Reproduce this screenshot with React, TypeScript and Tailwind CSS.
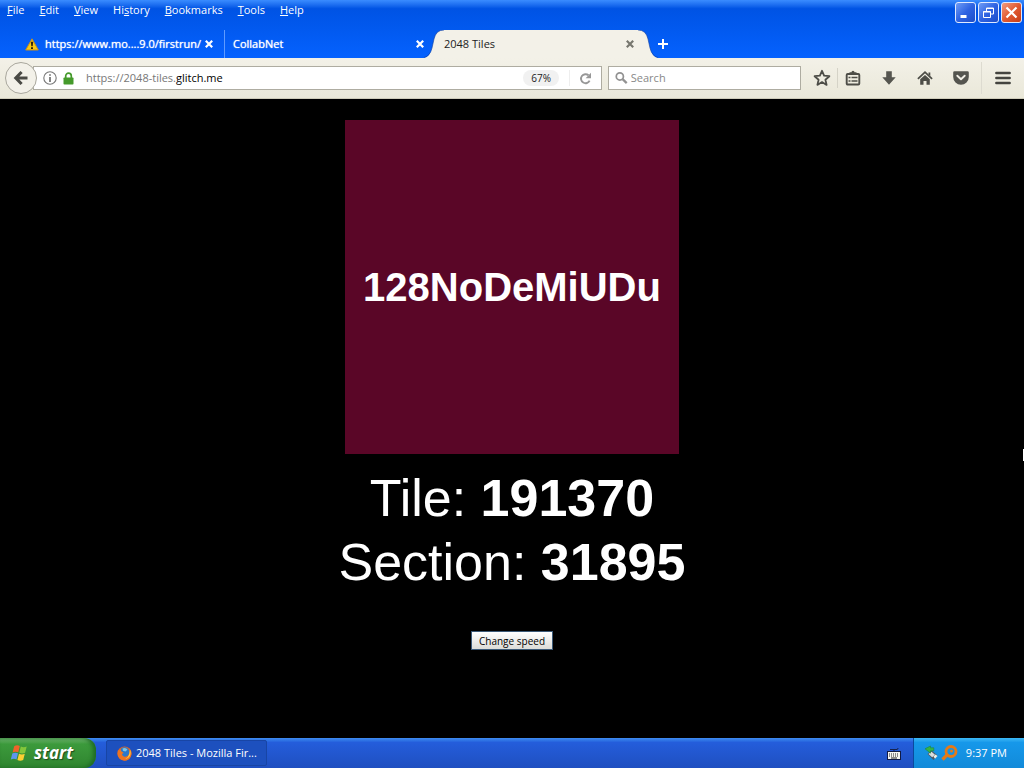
import React from "react";

const menus = ["File", "Edit", "View", "History", "Bookmarks", "Tools", "Help"];

function WarningIcon() {
  return (
    <svg width="14" height="13" viewBox="0 0 14 13" aria-hidden="true">
      <path d="M7 .8 13.3 12H.7Z" fill="#f6c915" stroke="#c98f1c" strokeWidth="1" strokeLinejoin="round" />
      <path d="M5.800 3.800h2.400l-.5 4.400H6.300ZM6 9.200h2v1.700H6Z" fill="#33250a" />
    </svg>
  );
}

function CloseGlyph() {
  return (
    <svg width="8" height="8" viewBox="0 0 8 8" aria-hidden="true">
      <path d="m.8.8 6.400 6.400M7.200.8.8 7.200" stroke="currentColor" strokeWidth="2.200" />
    </svg>
  );
}

function BackIcon() {
  return (
    <svg width="16" height="16" viewBox="0 0 16 16" aria-hidden="true">
      <path d="M8.6 2 2.8 8l5.8 6M3.5 8h11" fill="none" stroke="#4a4a45" strokeWidth="3.1" />
    </svg>
  );
}

function InfoIcon() {
  return (
    <svg width="14" height="14" viewBox="0 0 14 14" aria-hidden="true">
      <circle cx="7" cy="7" r="6.2" fill="none" stroke="#777" strokeWidth="1.1" />
      <path d="M6.2 3.2h1.6v1.5H6.2ZM6.2 6h1.6v5H6.2Z" fill="#666" />
    </svg>
  );
}

function LockIcon() {
  return (
    <svg width="11" height="13" viewBox="0 0 11 13" aria-hidden="true">
      <path d="M2.7 6V4a2.8 2.8 0 0 1 5.6 0v2" fill="none" stroke="#459a2b" strokeWidth="1.7" />
      <rect x=".5" y="5.5" width="10" height="7" rx=".8" fill="#459a2b" />
    </svg>
  );
}

function ReloadIcon() {
  return (
    <svg width="13" height="13" viewBox="0 0 13 13" aria-hidden="true">
      <path d="M9.5 3.3A4.5 4.5 0 1 0 10.6 8.6" fill="none" stroke="#979797" strokeWidth="1.9" />
      <path d="M12 .8v5.4H6.6Z" fill="#979797" />
    </svg>
  );
}

function SearchIcon() {
  return (
    <svg width="14" height="14" viewBox="0 0 14 14" aria-hidden="true">
      <circle cx="5.3" cy="5.3" r="3.9" fill="none" stroke="#929292" strokeWidth="1.9" />
      <path d="m8.3 8.3 4.5 4.3" stroke="#929292" strokeWidth="2.5" />
    </svg>
  );
}

function StarIcon() {
  return (
    <svg width="18" height="18" viewBox="0 0 18 18" aria-hidden="true">
      <path
        d="m9 1.8 2.1 4.900 5.300.5-4 3.500 1.200 5.200L9 13.100l-4.600 2.800 1.200-5.200-4-3.500 5.300-.5Z"
        fill="none"
        stroke="#4d4d47"
        strokeWidth="1.8"
        strokeLinejoin="round"
      />
    </svg>
  );
}

function ClipboardIcon() {
  return (
    <svg width="16" height="16" viewBox="0 0 16 16" aria-hidden="true">
      <rect x="1.700" y="4" width="12.600" height="10.500" rx="1" fill="none" stroke="#4d4d47" strokeWidth="1.900" />
      <path d="M4.500 4.500V2.200h2a1.500 1.500 0 0 1 3 0h2v2.300Z" fill="#4d4d47" />
      <path d="M3.500 7.500h2M6.500 7.500h6M3.500 11h2M6.500 11h6" stroke="#4d4d47" strokeWidth="1.500" />
    </svg>
  );
}

function DownloadIcon() {
  return (
    <svg width="16" height="16" viewBox="0 0 16 16" aria-hidden="true">
      <path d="M5.2 1.2h5.6v6h3.9L8 14.8 1.3 7.2h3.9Z" fill="#55554f" />
    </svg>
  );
}

function HomeIcon() {
  return (
    <svg width="16" height="16" viewBox="0 0 16 16" aria-hidden="true">
      <path d="m.9 8.8 7.1-6.600 7.100 6.600" fill="none" stroke="#4d4d47" strokeWidth="1.8" />
      <path d="M11.5 2.500h1.800v3.600l-1.800-1.600Z" fill="#4d4d47" />
      <path d="M3.200 9.200 8 4.900l4.800 4.300v5.600H9.500V11h-3v3.800H3.200Z" fill="#4d4d47" />
    </svg>
  );
}

function PocketIcon() {
  return (
    <svg width="16" height="16" viewBox="0 0 16 16" aria-hidden="true">
      <path d="M1.5 1.3h13q1.3 0 1.3 1.3V7A7.8 7.8 0 0 1 .2 7V2.6q0-1.3 1.3-1.3Z" fill="#55554f" />
      <path d="M4.3 5.7 8 9.2l3.7-3.5" fill="none" stroke="#f1efe6" strokeWidth="1.9" strokeLinecap="round" strokeLinejoin="round" />
    </svg>
  );
}

function MenuIcon() {
  return (
    <svg width="16" height="14" viewBox="0 0 16 14" aria-hidden="true">
      <path d="M1.4 2h13.2M1.4 7h13.2M1.4 12h13.2" stroke="#44443f" strokeWidth="2.6" strokeLinecap="round" />
    </svg>
  );
}

function WindowsFlag() {
  return (
    <svg width="20" height="18" viewBox="0 0 20 18" aria-hidden="true">
      <path d="M4.200 2.200Q7 .6 9.800 2L8.300 8.200Q5.400 7 2.600 8.400Z" fill="#f0632a" />
      <path d="M10.800 2.500q2.800 1.400 5.900 0l-1.600 6.200q-3 1.400-5.800 0Z" fill="#83c63b" />
      <path d="M2.300 9.400q2.800-1.400 5.700-.1L6.500 15.400Q3.700 14.200.8 15.600Z" fill="#5d96ee" />
      <path d="M9 9.800q2.900 1.400 5.800 0l-1.600 6.200q-2.900 1.400-5.800 0Z" fill="#fbcf33" />
    </svg>
  );
}

function FirefoxIcon() {
  return (
    <svg width="15" height="15" viewBox="0 0 15 15" aria-hidden="true">
      <circle cx="7.5" cy="7.5" r="7" fill="#e8641b" />
      <circle cx="7.5" cy="6.3" r="5" fill="#2b78c9" />
      <path d="M5.500 2.500q3-1.500 5 1l-2 2-2.500-.8Z" fill="#75c4ec" />
      <path d="M1 3.500.5 7.500a7 7 0 0 0 13.800 1.800Q15 5 12 2q1.300 3 .3 5.300-1.300 4-5 3.500Q4.600 10 5.200 7.800L6.800 7 4 5 3.700 3Q2.500 3.600 2 5Z" fill="#ee7420" />
      <path d="M13 3.400q1.300 2.700.3 5.600-1.600 3.500-5 4 3.500-2 4-5Z" fill="#fbd24a" />
    </svg>
  );
}

function KeyboardIcon() {
  return (
    <svg width="14" height="13" viewBox="0 0 14 13" aria-hidden="true">
      <path d="M3 2.500h7q1 0 1-1.500M7 5V3" fill="none" stroke="#16234f" strokeWidth="1" />
      <rect x=".5" y="4.500" width="13" height="8" fill="#f4f4f0" stroke="#101a44" />
      <path d="M2 7h10M2 9h10" stroke="#222" strokeWidth="1" strokeDasharray="1 1" />
      <path d="M4 11h6" stroke="#222" strokeWidth="1" />
    </svg>
  );
}

function UsbIcon() {
  return (
    <svg width="15" height="16" viewBox="0 0 15 16" aria-hidden="true">
      <path d="m3.5 9 4-3.5 6 5-4 4.5Z" fill="#4f5963" />
      <path d="m4.5 9 3-2.2 3.5 3-2.8 2.4Z" fill="#d8dde0" />
      <path d="m9.5 11.5 2-2 2 1.500-2.500 2.800Z" fill="#f0f0e8" />
      <path d="M1 3.800 6.500 1v1.800h3.300v3H6.500v2.400Z" fill="#35b446" stroke="#1c8742" strokeWidth=".6" />
    </svg>
  );
}

function MagnifierIcon() {
  return (
    <svg width="17" height="16" viewBox="0 0 17 16" aria-hidden="true">
      <circle cx="10" cy="6.500" r="5" fill="none" stroke="#e57a16" strokeWidth="2.800" />
      <circle cx="10.5" cy="6" r="1.5" fill="#e57a16" />
      <path d="m6.500 9.500-5 5" stroke="#e57a16" strokeWidth="3.200" />
    </svg>
  );
}

const caption =
  "flex h-[21px] w-[21px] items-center justify-center rounded-[3px] border border-[#dfe9ff]";

function WindowButtons() {
  return (
    <div className="flex gap-0.5 pt-0.5 pr-0.5">
      <button aria-label="Minimize" className={caption + " bg-linear-to-br from-[#6f9bf5] via-[#2f63e2] to-[#1b4dc9]"}>
        <svg width="15" height="15" viewBox="0 0 15 15"><path d="M2.500 11.500h6" stroke="#fff" strokeWidth="3" /></svg>
      </button>
      <button aria-label="Restore" className={caption + " bg-linear-to-br from-[#6f9bf5] via-[#2f63e2] to-[#1b4dc9]"}>
        <svg width="15" height="15" viewBox="0 0 15 15" fill="none" stroke="#fff">
          <path d="M5.500 6V3h7v6H10M5 3.500h8" />
          <path d="M2.500 6.500h7v6h-7ZM2 7h8" />
        </svg>
      </button>
      <button aria-label="Close" className={caption + " bg-linear-to-br from-[#f09a7d] via-[#e25a31] to-[#c63d15]"}>
        <svg width="15" height="15" viewBox="0 0 15 15"><path d="m2.500 2.500 10 10m0-10-10 10" stroke="#fff" strokeWidth="2.200" /></svg>
      </button>
    </div>
  );
}

function Tabs() {
  return (
    <div className="flex h-7 items-stretch pl-[25px]">
      <div className="flex w-[200px] items-center border-r border-[#5f9bff] text-white text-shadow-[0_0_1px_#fff]">
        <WarningIcon />
        <span className="ml-1.5 w-40 whitespace-nowrap">https://www.mo....9.0/firstrun/</span>
        <button aria-label="Close tab"><CloseGlyph /></button>
      </div>
      <div className="flex w-[199px] items-center pl-2 text-white text-shadow-[0_0_1px_#fff]">
        <span className="flex-1">CollabNet</span>
        <button aria-label="Close tab"><CloseGlyph /></button>
      </div>
      <svg width="20" height="28" viewBox="0 0 20 28" aria-hidden="true">
        <path d="M0 28Q6 27 8 18L10 9Q12 0 20 0V28Z" fill="#f3f1e8" />
        <path d="M0 27.5Q6 26 8 18L10 9Q12 0 20 0" fill="none" stroke="#123f9c" strokeWidth="1" opacity=".6" />
      </svg>
      <div className="flex w-[194px] items-center bg-[#f3f1e8] text-[#222]">
        <span className="flex-1">2048 Tiles</span>
        <button aria-label="Close tab" className="mr-1 text-[#77776f]"><CloseGlyph /></button>
      </div>
      <svg width="20" height="28" viewBox="0 0 20 28" aria-hidden="true">
        <path d="M20 28Q14 27 12 18L10 9Q8 0 0 0V28Z" fill="#f3f1e8" />
        <path d="M20 27.5Q14 26 12 18L10 9Q8 0 0 0" fill="none" stroke="#123f9c" strokeWidth="1" opacity=".6" />
      </svg>
      <button aria-label="New tab" className="flex items-center">
        <svg width="10" height="10" viewBox="0 0 10 10"><path d="M5 0v10M0 5h10" stroke="#fff" strokeWidth="2" /></svg>
      </button>
    </div>
  );
}

function Toolbar() {
  return (
    <div className="flex h-[41px] items-center border-b border-[#cfccba] bg-linear-to-b from-[#f3f1e8] to-[#eae8d9] pl-[5px]">
      <button aria-label="Back" className="z-10 flex h-8 w-8 shrink-0 items-center justify-center rounded-full border border-[#a9a79d] bg-[#f3f1e9]">
        <BackIcon />
      </button>
      <div className="-ml-1 flex h-6 flex-1 items-center border border-[#aeaca1] bg-white pl-[9px]">
        <InfoIcon />
        <span className="ml-1.5 flex"><LockIcon /></span>
        <a href="#page" className="ml-3 flex-1 text-[#777]">
          https://2048-tiles.<span className="text-black">glitch.me</span>
        </a>
        <button className="h-4 rounded-full bg-[#f1f1f1] px-2 text-[10px] leading-4 text-[#222]">67%</button>
        <button aria-label="Reload" className="ml-2.5 flex h-4 w-8 items-center justify-center border-l border-[#eee]"><ReloadIcon /></button>
      </div>
      <label className="ml-1.5 flex h-6 w-[193px] items-center border border-[#aeaca1] bg-white pl-1.5">
        <SearchIcon />
        <input type="text" aria-label="Search" placeholder="Search" className="ml-[3px] w-full min-w-0 outline-none placeholder:text-[#888]" />
      </label>
      <button aria-label="Bookmark this page" className="ml-3"><StarIcon /></button>
      <span className="ml-1.5 h-5 w-px bg-[#d5d3c7]" />
      <button aria-label="Show bookmarks" className="ml-[7px]"><ClipboardIcon /></button>
      <button aria-label="Downloads" className="ml-5"><DownloadIcon /></button>
      <button aria-label="Home" className="ml-5"><HomeIcon /></button>
      <button aria-label="Save to Pocket" className="ml-5"><PocketIcon /></button>
      <span className="ml-3 h-8 w-px bg-[#dddbd0]" />
      <button aria-label="Open menu" className="mr-[13px] ml-[13px]"><MenuIcon /></button>
    </div>
  );
}

function Taskbar() {
  return (
    <footer className="flex h-[30px] items-stretch bg-linear-to-b from-[#3f8cf0] via-[#245ddb] via-15% to-[#1f4fc0] text-white">
      <button className="flex w-24 items-center rounded-r-xl bg-linear-to-b from-[#72b872] via-[#3c9a3c] via-20% to-[#2f852f] pl-2.5 shadow-[inset_-3px_0_4px_#1e6a24]">
        <WindowsFlag />
        <span className="ml-1 text-[17px] leading-5 font-bold italic text-shadow-[1px_1px_1px_#1c4a1c]">start</span>
      </button>
      <button className="my-0.5 ml-2.5 flex w-[161px] items-center rounded-xs border border-[#1845a5] bg-[#1d50be] pl-2.5">
        <FirefoxIcon />
        <span className="ml-1 whitespace-nowrap">2048 Tiles - Mozilla Fir...</span>
      </button>
      <div className="ml-auto flex items-center pr-3"><KeyboardIcon /></div>
      <div className="flex items-center border-l border-[#0a4a9e] bg-linear-to-b from-[#3bb9f5] via-[#1698ea] via-15% to-[#128ad9] pr-[17px] pl-2.5">
        <UsbIcon />
        <span className="ml-0.5"><MagnifierIcon /></span>
        <time className="ml-2">9:37 PM</time>
      </div>
    </footer>
  );
}

export default function App() {
  return (
    <div className="flex min-h-screen flex-col bg-black font-['Open_Sans',sans-serif] text-[11px] leading-4">
      <header>
        <div className="flex h-[58px] flex-col justify-between bg-linear-to-b from-[#3a8cff] via-[#0053e4] via-15% to-[#0562ff]">
          <div className="flex items-start justify-between">
            <nav className="flex gap-[15px] pt-0.5 pl-[7px] text-white text-shadow-[0_0_1px_#fff]">
              {menus.map((m) => {
                const at = m === "History" ? 2 : 0;
                return (
                  <button key={m}>
                    {m.slice(0, at)}
                    <span className="underline">{m[at]}</span>
                    {m.slice(at + 1)}
                  </button>
                );
              })}
            </nav>
            <WindowButtons />
          </div>
          <Tabs />
        </div>
        <Toolbar />
      </header>
      <main id="page" className="relative flex flex-1 flex-col items-center pt-[21px] font-['Liberation_Sans',Arial,sans-serif] text-white">
        <div className="flex h-[334px] w-[334px] items-center justify-center bg-[#5a0627] text-[40px] leading-none font-bold">
          128NoDeMiUDu
        </div>
        <div className="mt-3 text-center text-[52px] leading-16">
          <p>Tile: <b>191370</b></p>
          <p>Section: <b>31895</b></p>
        </div>
        <button className="mt-[37px] h-[19px] border border-[#3c5a78] bg-linear-to-b from-white to-[#dcdcd8] px-[7px] font-['Open_Sans',sans-serif] text-[10px] leading-4 text-black">
          Change speed
        </button>
        <span className="absolute top-[350px] right-0 h-3 w-px bg-white" />
      </main>
      <Taskbar />
    </div>
  );
}
